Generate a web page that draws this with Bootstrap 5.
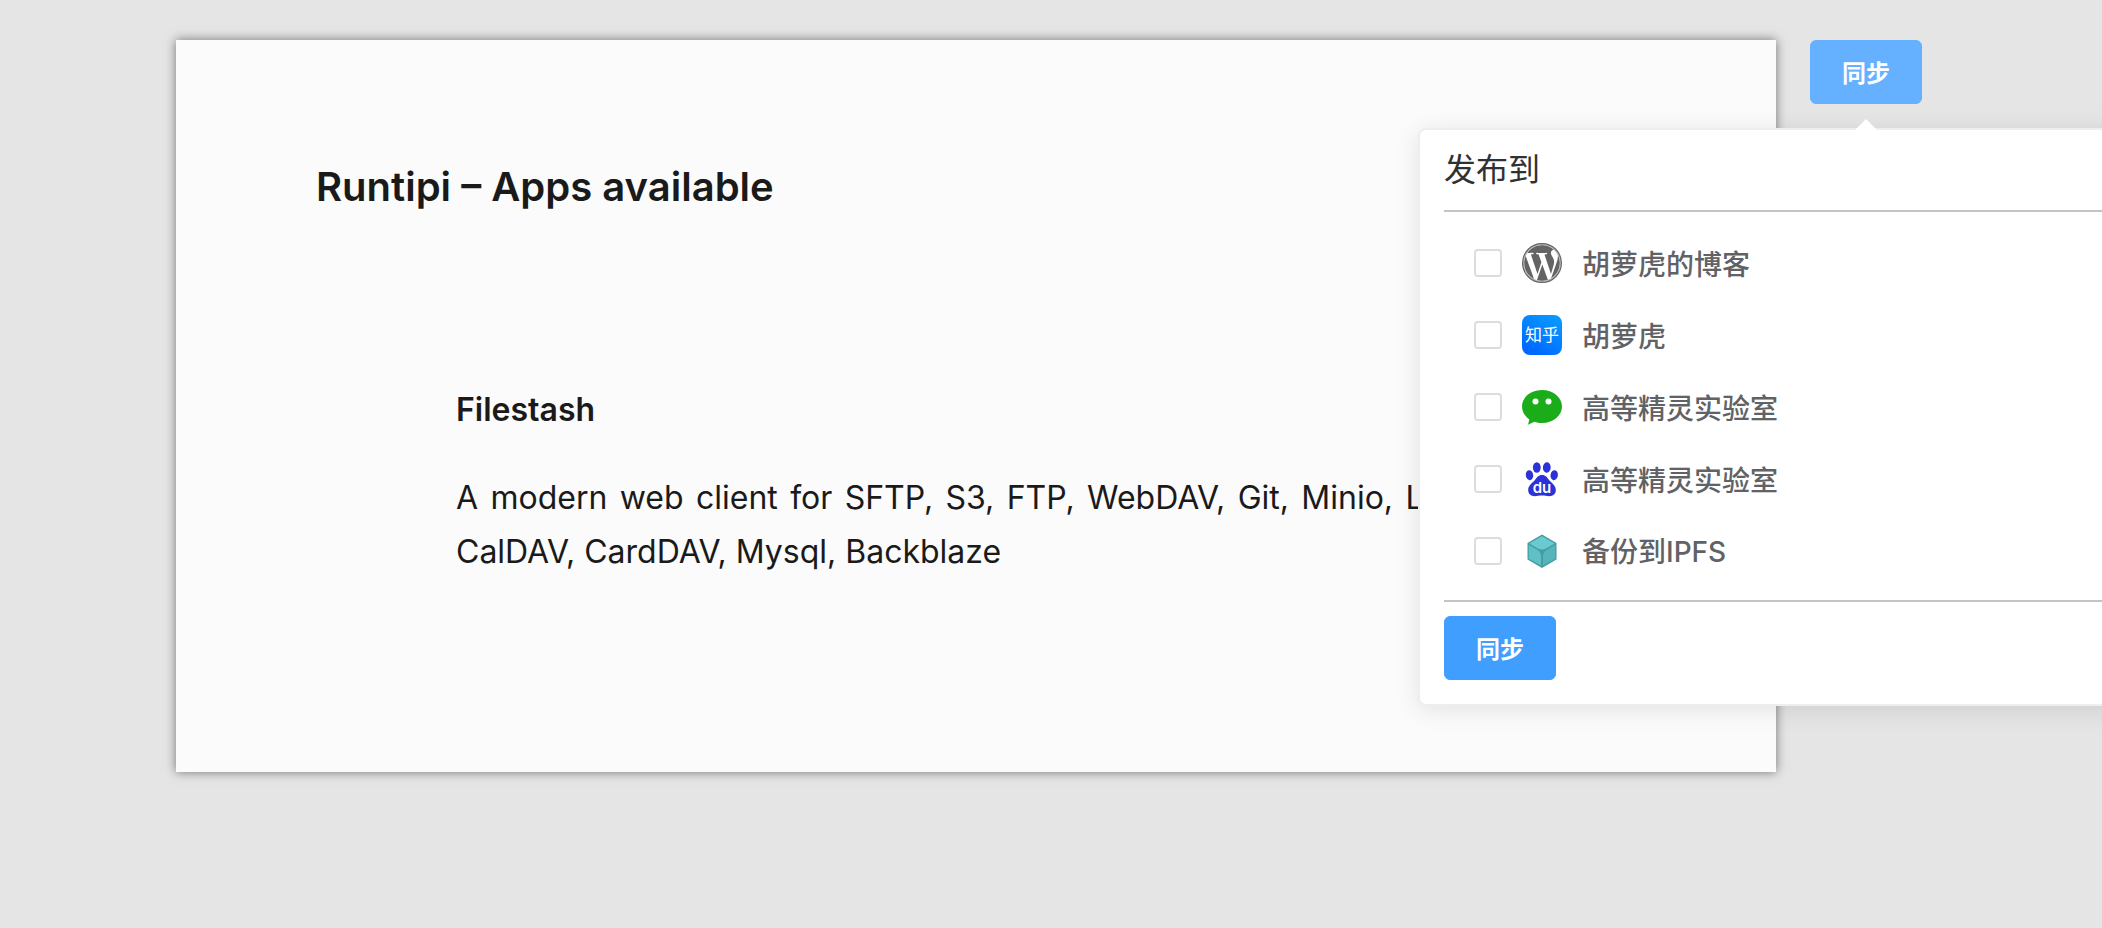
<!DOCTYPE html>
<html lang="zh-CN">
<head>
<meta charset="utf-8">
<meta name="viewport" content="width=device-width, initial-scale=1">
<title>Runtipi – Apps available</title>
<link href="https://cdn.jsdelivr.net/npm/bootstrap@5.3.0/dist/css/bootstrap.min.css" rel="stylesheet">
<style>
  body {
    background: #e5e5e5;
    color: #1a1a1a;
    font-family: Inter, "Noto Sans CJK SC", sans-serif;
    overflow-x: hidden;
  }
  .page-wrap { padding: 40px 180px 40px 176px; gap: 34px; }
  .paper {
    flex: 0 1 1600px;
    min-width: 0;
    padding: 119px 140px 193px;
    background: #fbfbfb;
    box-shadow: 0 0 10px rgba(0, 0, 0, .5);
  }
  .paper-title { font-size: 40px; line-height: 56px; font-weight: 600; margin-bottom: 168px; }
  .app-entry { padding: 0 140px; font-size: 32px; line-height: 54px; }
  .app-name { font-size: 32px; line-height: 54px; font-weight: 600; margin-bottom: 34px; }
  .app-text { text-align: justify; }

  .btn-sync {
    --bs-btn-color: #fff;
    --bs-btn-bg: #409eff;
    --bs-btn-border-color: #409eff;
    --bs-btn-hover-color: #fff;
    --bs-btn-hover-bg: #66b1ff;
    --bs-btn-hover-border-color: #66b1ff;
    --bs-btn-border-radius: 6px;
    width: 112px;
    height: 64px;
    padding: 0;
    font-family: "Noto Sans CJK SC", sans-serif;
    font-size: 24px;
    font-weight: 600;
  }
  .btn-sync.is-open { --bs-btn-bg: #66b1ff; --bs-btn-border-color: #66b1ff; }

  .publish-pop {
    top: calc(100% + 24px);
    width: 896px;
    padding: 24px;
    background: #fff;
    border: 2px solid #eeeeee;
    border-radius: 8px;
    box-shadow: 0 4px 24px rgba(0, 0, 0, .1);
  }
  .publish-pop::before {
    content: "";
    position: absolute;
    bottom: calc(100% - 1px);
    left: 50%;
    margin-left: -12px;
    border: 12px solid transparent;
    border-top-width: 0;
    border-bottom-color: #fff;
  }
  .pop-title { font-size: 32px; line-height: 32px; color: #303133; margin-bottom: 24px; }
  .pop-list { padding: 15px 30px 13px; border: solid #c4c4c4; border-width: 2px 0; margin-bottom: 14px; }
  .pop-item { height: 72px; gap: 20px; }
  .pop-item .form-check-input { width: 28px; height: 28px; border: 2px solid #dddddd; border-radius: 4px; }
  .pop-item label { gap: 20px; font-family: "Noto Sans CJK SC", sans-serif; font-size: 28px; line-height: 40px; font-weight: 500; color: #606266; }
  .pop-item .latin { font-family: Inter, sans-serif; }
  .pop-item svg { width: 40px; height: 40px; }
</style>
</head>
<body>
<div class="page-wrap d-flex align-items-start">
  <article class="paper">
    <h1 class="paper-title">Runtipi – Apps available</h1>
    <section class="app-entry">
      <h2 class="app-name">Filestash</h2>
      <p class="app-text mb-0">A modern web client for SFTP, S3, FTP, WebDAV, Git, Minio, LDAP, CalDAV, CardDAV, Mysql, Backblaze</p>
    </section>
  </article>

  <div class="position-relative flex-shrink-0">
    <button type="button" class="btn btn-sync is-open d-block" aria-expanded="true" aria-controls="publish">同步</button>

    <form id="publish" class="publish-pop position-absolute start-50 translate-middle-x">
      <div class="pop-title">发布到</div>
      <div class="pop-list">
        <div class="pop-item d-flex align-items-center">
          <input class="form-check-input m-0 flex-shrink-0" type="checkbox" id="t1">
          <label for="t1" class="d-flex align-items-center">
            <svg viewBox="0 0 24 24" aria-hidden="true"><circle cx="12" cy="12" r="11.5" fill="#fff"/><path fill="#646464" d="M21.469 6.825c.84 1.537 1.318 3.3 1.318 5.175 0 3.979-2.156 7.456-5.363 9.325l3.295-9.527c.615-1.54.82-2.771.82-3.864 0-.405-.026-.78-.07-1.11m-7.981.105c.647-.03 1.232-.105 1.232-.105.582-.075.514-.93-.067-.899 0 0-1.755.135-2.88.135-1.064 0-2.85-.15-2.85-.15-.585-.03-.661.855-.075.885 0 0 .54.061 1.125.09l1.68 4.605-2.37 7.08L5.354 6.9c.649-.03 1.234-.1 1.234-.1.585-.075.516-.93-.065-.896 0 0-1.746.138-2.874.138-.2 0-.438-.008-.69-.015C4.911 3.15 8.235 1.215 12 1.215c2.809 0 5.365 1.072 7.286 2.833-.046-.003-.091-.009-.141-.009-1.06 0-1.812.923-1.812 1.914 0 .89.513 1.643 1.06 2.531.411.72.89 1.643.89 2.977 0 .915-.354 1.994-.821 3.479l-1.075 3.585-3.9-11.61.001.014zM12 22.784c-1.059 0-2.081-.153-3.048-.437l3.237-9.406 3.315 9.087c.024.053.05.101.078.149-1.12.393-2.325.609-3.582.609M1.211 12c0-1.564.336-3.05.935-4.39L7.29 21.709C3.694 19.96 1.212 16.271 1.211 12"/><circle cx="12" cy="12" r="11.1" fill="none" stroke="#b8b8b8" stroke-width=".9"/><circle cx="12" cy="12" r="11.65" fill="none" stroke="#646464" stroke-width=".7"/></svg>
            <span>胡萝虎的博客</span>
          </label>
        </div>
        <div class="pop-item d-flex align-items-center">
          <input class="form-check-input m-0 flex-shrink-0" type="checkbox" id="t2">
          <label for="t2" class="d-flex align-items-center">
            <svg viewBox="0 0 40 40" aria-hidden="true"><defs><linearGradient id="zh" x1="1" y1="0" x2=".4" y2="1"><stop offset="0" stop-color="#0aa0ff"/><stop offset="1" stop-color="#0068ff"/></linearGradient></defs><rect width="40" height="40" rx="8" fill="url(#zh)"/><text x="20" y="26" text-anchor="middle" font-size="17" font-weight="400" fill="#fff">知乎</text></svg>
            <span>胡萝虎</span>
          </label>
        </div>
        <div class="pop-item d-flex align-items-center">
          <input class="form-check-input m-0 flex-shrink-0" type="checkbox" id="t3">
          <label for="t3" class="d-flex align-items-center">
            <svg viewBox="0 0 40 40" aria-hidden="true"><path fill="#1aad19" d="M20 3C9 3 0 10 0 19.400c0 5.300 3 9.900 7.300 12.900L6.100 37.800 12.300 34.700c2.400.9 5 1.300 7.700 1.300 11 0 20-7.200 20-16.500S31 3 20 3z"/><circle cx="13.500" cy="14.500" r="3" fill="#fff"/><circle cx="26.500" cy="14.500" r="3" fill="#fff"/></svg>
            <span>高等精灵实验室</span>
          </label>
        </div>
        <div class="pop-item d-flex align-items-center">
          <input class="form-check-input m-0 flex-shrink-0" type="checkbox" id="t4">
          <label for="t4" class="d-flex align-items-center">
            <svg viewBox="0 0 40 40" aria-hidden="true"><g fill="#2a32d8"><ellipse cx="7.500" cy="16.200" rx="3.700" ry="5" transform="rotate(-8 7.500 16.200)"/><ellipse cx="14.800" cy="8.500" rx="3.900" ry="5.200"/><ellipse cx="24.800" cy="8.500" rx="3.900" ry="5.200" transform="rotate(6 24.800 8.500)"/><ellipse cx="32.200" cy="16.200" rx="3.700" ry="5" transform="rotate(8 32.200 16.200)"/><path d="M20 16c-3.600 0-5.200 2.600-7 5-2.200 2.800-6.800 5-6.800 10 0 4 2.800 6.200 6.300 6.200 2.700 0 4.800-.7 7.500-.7s4.800.7 7.500.7c3.500 0 6.300-2.200 6.300-6.200 0-5-4.600-7.200-6.800-10-1.800-2.400-3.400-5-7-5z"/></g><text x="20" y="33.500" text-anchor="middle" font-family="Inter, sans-serif" font-size="15" font-weight="600" fill="#fff">du</text></svg>
            <span>高等精灵实验室</span>
          </label>
        </div>
        <div class="pop-item d-flex align-items-center">
          <input class="form-check-input m-0 flex-shrink-0" type="checkbox" id="t5">
          <label for="t5" class="d-flex align-items-center">
            <svg viewBox="0 0 40 40" aria-hidden="true"><path fill="#469ea2" d="M20 3.500 34.500 12v16.500L20 37 5.500 28.500V12z"/><path fill="#6acad1" d="M20 5.200 32.600 12.400 24 17.400a8 8 0 0 1-8 0L7.400 12.400z"/><path fill="#60c0c6" d="M6.800 14 15 18.800a8 8 0 0 1 4 7v8.800L6.800 27.700z"/><path fill="#55b5bb" d="M33.200 14 25 18.800a8 8 0 0 0-4 7v8.800l12.200-6.900z"/></svg>
            <span>备份到<span class="latin">IPFS</span></span>
          </label>
        </div>
      </div>
      <button type="button" class="btn btn-sync d-block">同步</button>
    </form>
  </div>
</div>
<script src="https://cdn.jsdelivr.net/npm/bootstrap@5.3.0/dist/js/bootstrap.bundle.min.js"></script>
</body>
</html>
